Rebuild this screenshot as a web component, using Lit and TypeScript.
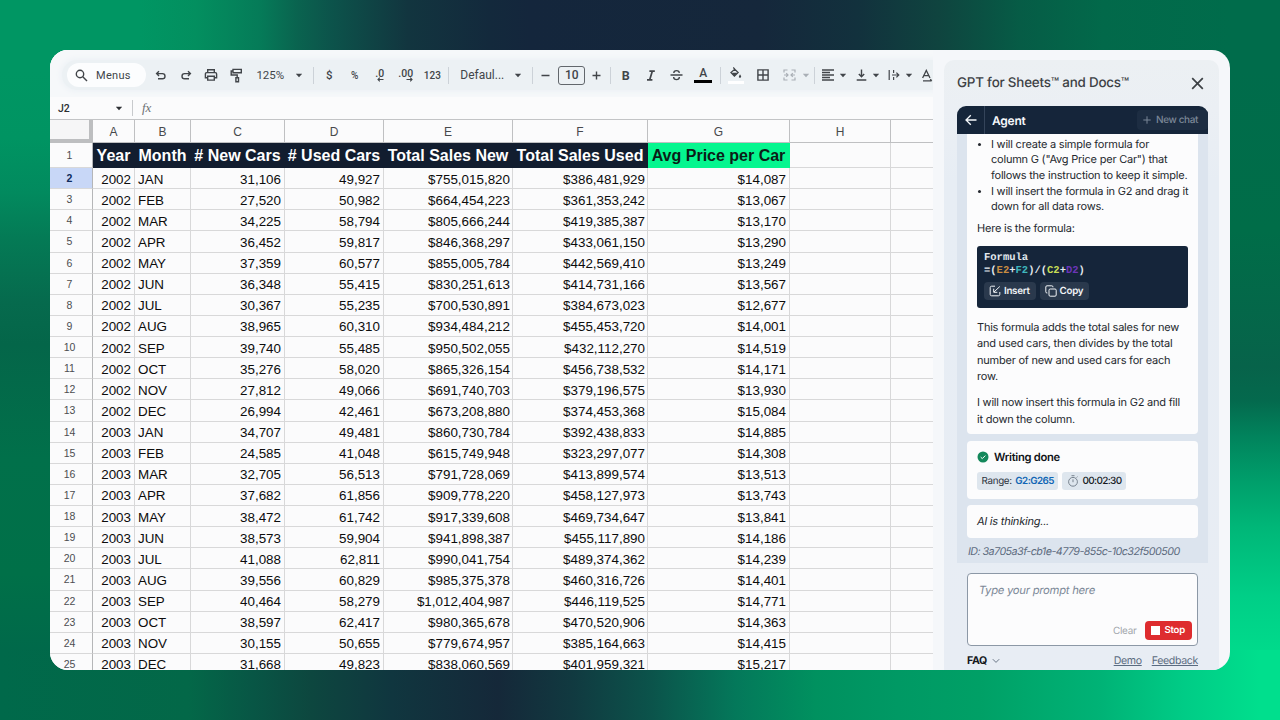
import { LitElement, html, css, svg, nothing } from "lit";
import { customElement } from "lit/decorators.js";
import { styleMap } from "lit/directives/style-map.js";

const HEADERS = ["Year", "Month", "# New Cars", "# Used Cars", "Total Sales New", "Total Sales Used", "Avg Price per Car"];

const ROWS = `2002 JAN 31,106 49,927 $755,015,820 $386,481,929 $14,087
2002 FEB 27,520 50,982 $664,454,223 $361,353,242 $13,067
2002 MAR 34,225 58,794 $805,666,244 $419,385,387 $13,170
2002 APR 36,452 59,817 $846,368,297 $433,061,150 $13,290
2002 MAY 37,359 60,577 $855,005,784 $442,569,410 $13,249
2002 JUN 36,348 55,415 $830,251,613 $414,731,166 $13,567
2002 JUL 30,367 55,235 $700,530,891 $384,673,023 $12,677
2002 AUG 38,965 60,310 $934,484,212 $455,453,720 $14,001
2002 SEP 39,740 55,485 $950,502,055 $432,112,270 $14,519
2002 OCT 35,276 58,020 $865,326,154 $456,738,532 $14,171
2002 NOV 27,812 49,066 $691,740,703 $379,196,575 $13,930
2002 DEC 26,994 42,461 $673,208,880 $374,453,368 $15,084
2003 JAN 34,707 49,481 $860,730,784 $392,438,833 $14,885
2003 FEB 24,585 41,048 $615,749,948 $323,297,077 $14,308
2003 MAR 32,705 56,513 $791,728,069 $413,899,574 $13,513
2003 APR 37,682 61,856 $909,778,220 $458,127,973 $13,743
2003 MAY 38,472 61,742 $917,339,608 $469,734,647 $13,841
2003 JUN 38,573 59,904 $941,898,387 $455,117,890 $14,186
2003 JUL 41,088 62,811 $990,041,754 $489,374,362 $14,239
2003 AUG 39,556 60,829 $985,375,378 $460,316,726 $14,401
2003 SEP 40,464 58,279 $1,012,404,987 $446,119,525 $14,771
2003 OCT 38,597 62,417 $980,365,678 $470,520,906 $14,363
2003 NOV 30,155 50,655 $779,674,957 $385,164,663 $14,415
2003 DEC 31,668 49,823 $838,060,569 $401,959,321 $15,217`
  .split("\n")
  .map((line) => line.split(" "));

const icon = (w: number, h: number, body: unknown) =>
  html`<svg width=${w} height=${h} viewBox="0 0 ${w} ${h}" fill="none" stroke="currentColor" stroke-width="1.4">${body}</svg>`;

const caret = icon(8, 5, svg`<path d="M.8.8h6.4L4 4.3z" fill="currentColor" stroke="none"/>`);

interface Tool {
  /** Horizontal centre of the tool, measured from the left edge of the toolbar row. */
  at: number;
  width: number;
  kind?: string;
  body?: unknown;
}

const TOOLS: Tool[] = [
  { at: 94.5, width: 14, body: icon(12, 12, svg`<path d="M4 2.2 1.6 4.6 4 7M1.8 4.6h5.6a2.6 2.6 0 0 1 0 5.2H3"/>`) },
  { at: 119.5, width: 14, body: icon(12, 12, svg`<path d="M8 2.2l2.4 2.4L8 7M10.2 4.6H4.6a2.6 2.6 0 0 0 0 5.2H9"/>`) },
  { at: 145, width: 14, body: icon(14, 14, svg`<path d="M3.7 4.4V1.7h6.6v2.7M3.7 9.8H1.4V5.9q0-1.3 1.3-1.3h8.6q1.3 0 1.3 1.3v3.9h-2.3M3.7 8.2h6.6v3.9H3.7z"/>`) },
  { at: 170, width: 14, body: icon(13, 15, svg`<path d="M3 1.4h8.3v3.4H3zM3 3H1.2v4h6v2.6M5.9 9.8h2.6v4H5.9z"/>`) },
  { at: 204, width: 30, body: html`<span class="t12">125%</span>` },
  { at: 233, width: 8, body: caret },
  { at: 247.5, width: 1, kind: "divider" },
  { at: 263, width: 10, body: html`<span class="t11">$</span>` },
  { at: 288.5, width: 12, body: html`<span class="t10">%</span>` },
  { at: 313.5, width: 15, body: html`<span class="decimal">.0${icon(7, 5, svg`<path d="M6.5 2.5H1M2.8.7 1 2.5l1.8 1.8" stroke-width="1.1"/>`)}</span>` },
  { at: 339.5, width: 15, body: html`<span class="decimal">.00${icon(7, 5, svg`<path d="M.5 2.5H6M4.2.7 6 2.5 4.2 4.3" stroke-width="1.1"/>`)}</span>` },
  { at: 366, width: 18, body: html`<span class="t10">123</span>` },
  { at: 382, width: 1, kind: "divider" },
  { at: 416, width: 46, body: html`<span class="font">Defaul...</span>` },
  { at: 451.5, width: 8, body: caret },
  { at: 466.5, width: 1, kind: "divider" },
  { at: 479.5, width: 10, body: icon(9, 9, svg`<path d="M.5 4.5h8"/>`) },
  { at: 505.5, width: 27, kind: "size", body: html`10` },
  { at: 530.5, width: 10, body: icon(9, 9, svg`<path d="M.5 4.5h8M4.5.5v8"/>`) },
  { at: 544.5, width: 1, kind: "divider" },
  { at: 559.5, width: 12, body: html`<span class="bold">B</span>` },
  { at: 585, width: 12, body: icon(10, 11, svg`<path d="M3.4 1.2h5.4M1 9.8h5.4M6.3 1.2 3.7 9.8" stroke-width="1.7"/>`) },
  { at: 610.5, width: 14, body: icon(13, 12, svg`<path d="M.5 6h12M9.4 3.9Q9.2 1.6 6.5 1.6T3.8 3.9M3.6 8q.2 2.6 2.9 2.6T9.4 8" stroke-width="1.4"/>`) },
  { at: 637, width: 18, kind: "ink", body: html`A` },
  { at: 654, width: 1, kind: "divider" },
  { at: 669.5, width: 16, kind: "raised", body: icon(13, 12, svg`<path d="M4.2.5l1.7 1.7M5.7 2.2 9.2 5.6 5.4 9.2 1.9 5.6z" stroke-width="1.2"/><path d="M2.4 5.8h6.4L5.4 9.2zM11 7.2q2.4 3.4 0 3.6t0-3.6z" fill="currentColor" stroke="none"/>`) },
  { at: 696.5, width: 12, body: icon(12, 12, svg`<path d="M.9.9h10.2v10.2H.9zM6 1v10M1 6h10"/>`) },
  { at: 723, width: 13, kind: "dim", body: icon(13, 12, svg`<path d="M4.5 1H1v2.4M8.5 1H12v2.4M4.5 11H1V8.6M8.5 11H12V8.6M1 6h3.8M3.2 4.2 5 6 3.2 7.8M12 6H8.2M9.8 4.2 8 6l1.8 1.8" stroke-width="1.2"/>`) },
  { at: 740, width: 8, kind: "dim", body: caret },
  { at: 748.5, width: 1, kind: "divider" },
  { at: 762, width: 12, body: icon(12, 12, svg`<path d="M0 1h12M0 3.5h8M0 6h12M0 8.5h8M0 11h12" stroke-width="1.3"/>`) },
  { at: 776.5, width: 8, body: caret },
  { at: 795, width: 11, body: icon(11, 12, svg`<path d="M5.5.5v7M2.8 5l2.7 2.7L8.2 5M.7 11h9.6"/>`) },
  { at: 809.5, width: 8, body: caret },
  { at: 827.5, width: 12, body: icon(12, 12, svg`<path d="M1.2 1v10M4 6h7M8.4 3.6 10.8 6 8.4 8.4M5.6 1v3M5.6 8v3" stroke-width="1.2"/>`) },
  { at: 842.5, width: 8, body: caret },
  { at: 861, width: 12, body: icon(12, 13, svg`<path d="M1.6 9 5.3 1.4 9 9M2.7 6.6h5.2M2 11.8h8.6M9.2 10.2l1.6 1.6" stroke-width="1.3"/>`) },
];

@customElement("sheet-toolbar")
class SheetToolbar extends LitElement {
  static styles = css`
    :host { display: block; }
    .bar {
      display: flex; align-items: center; height: 30px;
      margin-left: 12px; padding-left: 5px;
      background: #ecf1f4; border-radius: 15px 0 0 15px;
      box-shadow: 0 0 5px 2px #eef2f6;
      color: #414549; font-family: Roboto, sans-serif; overflow: hidden;
    }
    .menus {
      display: flex; align-items: center; gap: 8px; box-sizing: border-box; width: 79px; height: 24px; flex: none;
      padding-left: 8px; background: #fcfdfe; border-radius: 12px; font-size: 11px; letter-spacing: 0.3px;
    }
    .tool { display: flex; flex: none; align-items: center; justify-content: center; white-space: nowrap; height: 24px; }
    .tool svg { flex: none; }
    .divider { height: 17px; background: #ccd2d8; }
    .dim { color: #a9afb5; }
    .t12 { font-size: 11.5px; }
    .t11 { font-size: 11.5px; font-weight: 500; }
    .t10 { font-size: 10px; font-weight: 500; }
    .font { font-size: 12px; }
    .decimal { display: flex; flex-direction: column; align-items: flex-end; font-size: 10.5px; font-weight: 500; line-height: 9px; }
    .decimal svg { margin-top: -1px; }
    .size { box-sizing: border-box; height: 19px; border: 1px solid #62676c; border-radius: 3px; font-size: 12px; font-weight: 500; }
    .bold { font-size: 12.5px; font-weight: 700; }
    .ink { box-sizing: border-box; height: 16px; border-bottom: 3px solid #000; font-size: 12px; font-weight: 500; line-height: 13px; }
    .raised { height: 14px; align-items: flex-start; border-bottom: 3px solid #fff; }
  `;
  render() {
    let end = 79.7;
    return html`<div class="bar">
      <div class="menus">
        ${icon(13, 13, svg`<circle cx="5" cy="5" r="3.7"/><path d="M7.8 7.8 12 12"/>`)}<span>Menus</span>
      </div>
      ${TOOLS.map((tool) => {
        const gap = tool.at - tool.width / 2 - end;
        end = tool.at + tool.width / 2;
        return html`<div class="tool ${tool.kind ?? ""}" style=${styleMap({ width: `${tool.width}px`, marginLeft: `${gap}px` })}>${tool.body ?? nothing}</div>`;
      })}
    </div>`;
  }
}

@customElement("sheet-grid")
class SheetGrid extends LitElement {
  static styles = css`
    :host { display: block; font-family: "Liberation Sans", Arial, sans-serif; color: #0c0c0c; }
    .row {
      display: grid; height: 21.13px;
      grid-template-columns: 43px 42px 56px 94px 99px 129px 135px 142px 101px 42px;
    }
    .cell {
      display: flex; align-items: center; justify-content: flex-end; box-sizing: border-box;
      padding: 2px 3px 0 3px; border-right: 1px solid #d8d8d9; border-bottom: 1px solid #d8d8d9;
      font-size: 13.4px; white-space: nowrap;
    }
    .cell:nth-child(3) { justify-content: flex-start; }
    .cell:nth-child(6), .cell:nth-child(7) { padding-right: 2px; }
    .cell:last-child { border-right: 0; }
    .row > .num {
      justify-content: center; padding: 0 3px 0 0; border-right: 1px solid #b5b6b8;
      font-size: 10.5px; color: #4b4d50;
    }
    .row > .active { background: #c8d7f7; color: #0d2a5c; font-weight: 700; }
    .letters { height: 24px; border-top: 1px solid #c3c4c6; box-sizing: border-box; }
    .letters > .cell, .letters > .cell:nth-child(3) {
      justify-content: center; padding: 1px 0 0; border-color: #bfc0c2; font-size: 12px; color: #47494c;
    }
    .letters > .corner { background: #f6f6f7; border-right: 4px solid #bdbec0; border-bottom: 4px solid #bdbec0; }
    .titles { height: 25px; }
    .titles > .title {
      justify-content: center; padding: 2px 0 0; background: #121d2f; border-color: #121d2f; color: #fff;
      font-size: 16px; font-weight: 700;
    }
    .titles > .title:nth-child(3) { justify-content: center; }
    .titles > .accent { background: #05f68f; border-color: #05f68f; color: #0b1d17; }
  `;
  render() {
    return html`
      <div class="row letters">
        <div class="cell corner"></div>
        ${["A", "B", "C", "D", "E", "F", "G", "H", ""].map((l) => html`<div class="cell">${l}</div>`)}
      </div>
      <div class="row titles">
        <div class="cell num">1</div>
        ${HEADERS.map((h, i) => html`<div class="cell title ${i === 6 ? "accent" : ""}">${h}</div>`)}
        <div class="cell"></div><div class="cell"></div>
      </div>
      ${ROWS.map((r, i) => html`<div class="row">
        <div class="cell num ${i === 0 ? "active" : ""}">${i + 2}</div>
        ${r.map((v) => html`<div class="cell">${v}</div>`)}
        <div class="cell"></div><div class="cell"></div>
      </div>`)}
    `;
  }
}

@customElement("agent-panel")
class AgentPanel extends LitElement {
  static styles = css`
    :host { display: block; font-family: Inter, sans-serif; color: #24282e; font-size: 11px; letter-spacing: -0.22px; white-space: nowrap; text-rendering: geometricPrecision; }
    .head { display: flex; align-items: center; justify-content: space-between; height: 46px; padding: 0 15px 0 13px; color: #3d4145; }
    .name { font-size: 13.4px; font-weight: 500; letter-spacing: -0.2px; }
    .chat { margin: 0 11px 0 13px; }
    .top {
      display: flex; align-items: center; height: 28px; background: #15253a; color: #f5f8fb;
      border-radius: 9px 9px 0 0;
    }
    .back { display: flex; align-items: center; justify-content: center; width: 27px; height: 28px; border-right: 1px solid #34445a; }
    .agent { margin-left: 7px; flex: 1; font-size: 12px; font-weight: 600; }
    .new { display: flex; align-items: center; gap: 5px; height: 20px; padding: 0 10px 0 6px; background: #1d2d42; border-radius: 4px; color: #7b8797; font-size: 10px; font-weight: 500; letter-spacing: -0.4px; }
    .feed { height: 429px; box-sizing: border-box; padding: 0 10px; background: #dce4ee; }
    .card { background: #fcfcfd; border-radius: 4px; box-sizing: border-box; padding: 0 10px; }
    .message { height: 300px; border-radius: 0 0 4px 4px; padding-top: 3px; }
    ul { margin: 0; padding: 0 0 0 14px; line-height: 15.4px; }
    li { margin-bottom: 0.8px; }
    li::marker { font-size: 10px; }
    p { margin: 0; line-height: 16.3px; }
    .intro { margin-top: 5px; }
    .code {
      height: 62px; box-sizing: border-box; margin: 10px 0 11px; padding: 6px 7px; background: #15253a; border-radius: 3px; letter-spacing: 0;
      font-family: "Liberation Mono", monospace; color: #e3e9ef; font-weight: 700; font-size: 10.5px; line-height: 13px;
    }
    .e { color: #c78c42; } .f { color: #3fb6bd; } .c { color: #c6dc56; } .d { color: #6c35b8; }
    .actions { display: flex; gap: 4px; margin-top: 4px; letter-spacing: -0.3px; }
    .action { display: flex; align-items: center; gap: 3px; height: 18px; padding: 0 6px 0 5px; background: #2a394d; border-radius: 4px; font: 600 9.8px Inter, sans-serif; color: #f0f3f6; }
    .then { margin-top: 10px; }
    .done { height: 58px; margin-top: 7px; padding-top: 7.5px; }
    .status { display: flex; align-items: center; gap: 5px; height: 17px; color: #101318; font-weight: 600; font-size: 11.2px; letter-spacing: -0.28px; }
    .chips { display: flex; gap: 4px; margin-top: 6.5px; letter-spacing: -0.3px; }
    .chip { display: flex; align-items: center; height: 18px; box-sizing: border-box; padding: 0 4.5px; gap: 3.5px; background: #dee6ee; border-radius: 3px; font-size: 9.8px; color: #2c333c; }
    .range { color: #1266b5; font-weight: 600; letter-spacing: -0.55px; }
    .time { font-size: 10px; font-weight: 500; color: #14181d; letter-spacing: -0.65px; }
    .slant { display: inline-block; transform: skewX(-10deg); }
    .thinking { height: 33px; margin-top: 6px; line-height: 33px; }
    .id { margin-top: 5px; padding-left: 1px; line-height: 18px; color: #5c6b7e; font-size: 10.7px; letter-spacing: -0.53px; }
    .prompt {
      display: flex; flex-direction: column; justify-content: space-between; height: 73px; box-sizing: border-box;
      margin: 10px 10px 0; padding: 8px 5px 5px 11px; border: 1px solid #8c98a6; border-radius: 4px; background: #fcfcfd;
      color: #7c8998;
    }
    .hint { font-size: 11.2px; line-height: 16px; }
    .buttons { display: flex; align-items: center; justify-content: flex-end; gap: 8px; font-size: 9.9px; color: #a0a5ab; }
    .stop { display: flex; align-items: center; gap: 4.5px; height: 19px; padding: 0 7px 0 6.5px; background: #de2c2f; color: #fff; border-radius: 4px; font-weight: 600; font-size: 9.6px; }
    .square { width: 9px; height: 9px; background: #fff; }
    .foot { display: flex; align-items: center; margin: 6px 10px 0; height: 17px; color: #5a6b80; font-size: 10.6px; letter-spacing: -0.35px; }
    .faq { display: flex; align-items: center; gap: 5px; flex: 1; color: #14181d; font-weight: 700; }
    .link { text-decoration: underline; margin-left: 10px; }
  `;
  render() {
    return html`
      <div class="head">
        <span class="name">GPT for Sheets™ and Docs™</span>
        ${icon(13, 13, svg`<path d="M1.2 1.2 11.8 11.8M11.8 1.2 1.2 11.8" stroke-width="1.7"/>`)}
      </div>
      <div class="chat">
        <div class="top">
          <div class="back">${icon(12, 12, svg`<path d="M11.5 6H1M5.8 1.2 1 6l4.8 4.8" stroke-width="1.3"/>`)}</div>
          <div class="agent">Agent</div>
          <div class="new">${icon(8, 8, svg`<path d="M4 .3v7.4M.3 4h7.4" stroke-width="1"/>`)}New chat</div>
        </div>
        <div class="feed">
          <div class="card message">
            <ul>
              <li>I will create a simple formula for<br />column G ("Avg Price per Car") that<br />follows the instruction to keep it simple.</li>
              <li>I will insert the formula in G2 and drag it<br />down for all data rows.</li>
            </ul>
            <p class="intro">Here is the formula:</p>
            <div class="code">
              <div>Formula</div>
              <div>=(<span class="e">E2</span>+<span class="f">F2</span>)/(<span class="c">C2</span>+<span class="d">D2</span>)</div>
              <div class="actions">
                <div class="action">${icon(12, 12, svg`<path d="M6 1.2H2.6Q1.2 1.2 1.2 2.6v6.8q0 1.4 1.4 1.4h6.8q1.4 0 1.4-1.4V7M10.8 1.5 5 7M4.7 3.7v3.6h3.6" stroke-width="1"/>`)}Insert</div>
                <div class="action">${icon(12, 12, svg`<rect x="4" y="4" width="7.2" height="7.2" rx="1.2" stroke-width="1"/><path d="M2.4 8H2Q.8 8 .8 6.8V2Q.8.8 2 .8h4.8Q8 .8 8 2v.3" stroke-width="1"/>`)}Copy</div>
              </div>
            </div>
            <p>This formula adds the total sales for new<br />and used cars, then divides by the total<br />number of new and used cars for each<br />row.</p>
            <p class="then">I will now insert this formula in G2 and fill<br />it down the column.</p>
          </div>
          <div class="card done">
            <div class="status">${icon(12, 12, svg`<circle cx="6" cy="6" r="5.5" fill="#14885b" stroke="none"/><path d="M3.7 6.1 5.3 7.6 8.3 4.6" stroke="#fff" stroke-width="1"/>`)}Writing done</div>
            <div class="chips">
              <div class="chip">Range: <span class="range">G2:G265</span></div>
              <div class="chip">${icon(12, 12, svg`<g stroke="#78838f" stroke-width="1"><circle cx="6" cy="6.8" r="4.4"/><path d="M6 4.4v2.8M4.5.7h3M9.5 2.6l1-.9"/></g>`)}<span class="time">00:02:30</span></div>
            </div>
          </div>
          <div class="card thinking"><span class="slant">AI is thinking...</span></div>
          <div class="id"><span class="slant">ID: 3a705a3f-cb1e-4779-855c-10c32f500500</span></div>
        </div>
        <div class="prompt">
          <div class="hint"><span class="slant">Type your prompt here</span></div>
          <div class="buttons"><span>Clear</span><div class="stop"><div class="square"></div>Stop</div></div>
        </div>
        <div class="foot">
          <div class="faq">FAQ ${icon(8, 6, svg`<path d="M.8 1.2 4 4.4l3.2-3.2" stroke="#6a7686" stroke-width="1"/>`)}</div>
          <span class="link">Demo</span><span class="link">Feedback</span>
        </div>
      </div>
    `;
  }
}

@customElement("app-root")
class AppRoot extends LitElement {
  static styles = css`
    :host {
      display: block; box-sizing: border-box; width: 1280px; height: 720px; padding: 50px;
      background:
        linear-gradient(to right, #009663 0, #009663 140px, #038f5f 196px, #057b58 260px, #0a634f 298px, #0c544b 330px, #12353f 408px, #13293c 490px, #14263c 530px, #15273b 759px, #12313d 857px, #0f443f 939px, #065c46 1020px, #02694a 1102px, #006c4b 1230px) top / 100% 70px no-repeat,
        linear-gradient(to right, #00694a 0, #036848 188px, #085645 253px, #0d473f 310px, #10363f 392px, #152839 498px, #113940 571px, #0b544b 653px, #04785a 735px, #00915f 816px, #009964 898px, #00a066 980px, #00b376 1102px, #00cc86 1184px, #00df8d 1260px) bottom / 100% 70px no-repeat,
        linear-gradient(to bottom, #009663 0, #009663 70px, #009462 138px, #028a5e 193px, #047a55 239px, #066a4d 303px, #046649 344px, #01704a 459px, #007048 574px, #00694a 650px) left / 50px 100% no-repeat,
        linear-gradient(to bottom, #006c4b 0, #006c4b 70px, #006d48 230px, #07634a 367px, #04694d 400px, #01835c 436px, #009f6b 482px, #00b778 528px, #00cf87 597px, #00da8b 650px, #00e08e 720px) right / 50px 100% no-repeat;
    }
    .window { display: flex; height: 620px; border-radius: 18px; overflow: hidden; background: #f5f7fa; }
    .sheet { width: 883px; height: 620px; overflow: hidden; background: #fbfbfc; }
    .tools { padding-top: 10px; height: 47px; box-sizing: border-box; background: #f6f8fa; }
    .formula-bar { display: flex; align-items: center; height: 22px; color: #2c2f33; font: 500 10.5px Roboto, sans-serif; }
    .ref { margin-left: 8px; width: 57px; }
    .bar { width: 1px; height: 16px; margin: 0 9px 0 9px; background: #c8cacd; }
    .fx { font: italic 13px "Liberation Serif", serif; color: #6c7074; }
    .side { width: 275px; height: 610px; margin: 10px 0 0 11px; background: linear-gradient(to bottom, #ecf0f3 0, #ebeff4 50px, #e7edf4 120px, #e8edf4 100%); border-radius: 10px 10px 0 0; overflow: hidden; }
  `;
  render() {
    return html`<div class="window">
      <div class="sheet">
        <div class="tools"><sheet-toolbar></sheet-toolbar></div>
        <div class="formula-bar"><span class="ref">J2</span>${caret}<span class="bar"></span><span class="fx">fx</span></div>
        <sheet-grid></sheet-grid>
      </div>
      <div class="side"><agent-panel></agent-panel></div>
    </div>`;
  }
}
